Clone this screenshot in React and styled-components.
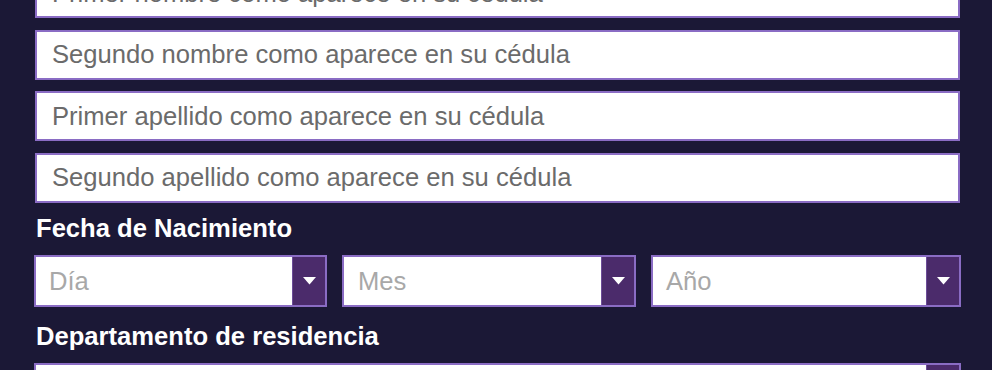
import React from "react";
import styled, { createGlobalStyle } from "styled-components";

const GlobalStyle = createGlobalStyle`
  html, body {
    margin: 0;
    padding: 0;
    background-color: #1b1836;
    overflow: hidden;
  }
  body {
    font-family: "Liberation Sans", Arial, sans-serif;
  }
`;

const Page = styled.div`
  width: 992px;
  height: 370px;
  background-color: #1b1836;
  overflow: hidden;
`;

const Form = styled.form`
  display: flex;
  flex-direction: column;
  width: 928px;
  margin-left: 34px;
  margin-top: -32px;
`;

const TextInput = styled.input`
  box-sizing: border-box;
  width: 925px;
  height: 50px;
  margin: 0 0 11.5px 1px;
  padding: 0 15px;
  border: 2px solid #8a6cc4;
  background: #ffffff;
  font-family: "Liberation Sans", Arial, sans-serif;
  font-size: 25.6px;
  color: #333;
  outline: none;
  &::placeholder {
    color: #6b6b6b;
  }
`;

const Label = styled.label`
  display: block;
  color: #ffffff;
  font-weight: bold;
  font-size: 25.6px;
  line-height: 29px;
  margin: ${(p) => p.$top}px 0 12px 2px;
`;

const SelectRow = styled.div`
  display: flex;
  gap: 15px;
`;

const SelectBox = styled.div`
  box-sizing: border-box;
  display: flex;
  width: ${(p) => p.$width}px;
  height: 52px;
  border: 2px solid #8a6cc4;
  background: #ffffff;
`;

const SelectText = styled.div`
  flex: 1;
  display: flex;
  align-items: center;
  padding-left: ${(p) => p.$pad || 13}px;
  font-size: 25.6px;
  color: #a8a8a8;
`;

const ArrowBox = styled.div`
  width: 32px;
  display: flex;
  align-items: center;
  justify-content: center;
  background: #4b2b6b;
  border-left: 1px solid #6c4c98;
`;

const Caret = () => (
  <svg width="13" height="8" viewBox="0 0 13 8">
    <polygon points="0,0 13,0 6.5,7.5" fill="#ffffff" />
  </svg>
);

function Select({ placeholder, width, pad }) {
  return (
    <SelectBox $width={width}>
      <SelectText $pad={pad}>{placeholder}</SelectText>
      <ArrowBox>
        <Caret />
      </ArrowBox>
    </SelectBox>
  );
}

const fields = [
  "Primer nombre como aparece en su cédula",
  "Segundo nombre como aparece en su cédula",
  "Primer apellido como aparece en su cédula",
  "Segundo apellido como aparece en su cédula",
];

export default function App() {
  return (
    <Page>
      <GlobalStyle />
      <Form>
        {fields.map((f) => (
          <TextInput key={f} placeholder={f} />
        ))}
        <Label $top={0}>Fecha de Nacimiento</Label>
        <SelectRow>
          <Select placeholder="Día" width={293} pad={13} />
          <Select placeholder="Mes" width={294} pad={14} />
          <Select placeholder="Año" width={310} pad={13} />
        </SelectRow>
        <Label $top={15}>Departamento de residencia</Label>
        <Select placeholder="" width={927} />
      </Form>
    </Page>
  );
}
